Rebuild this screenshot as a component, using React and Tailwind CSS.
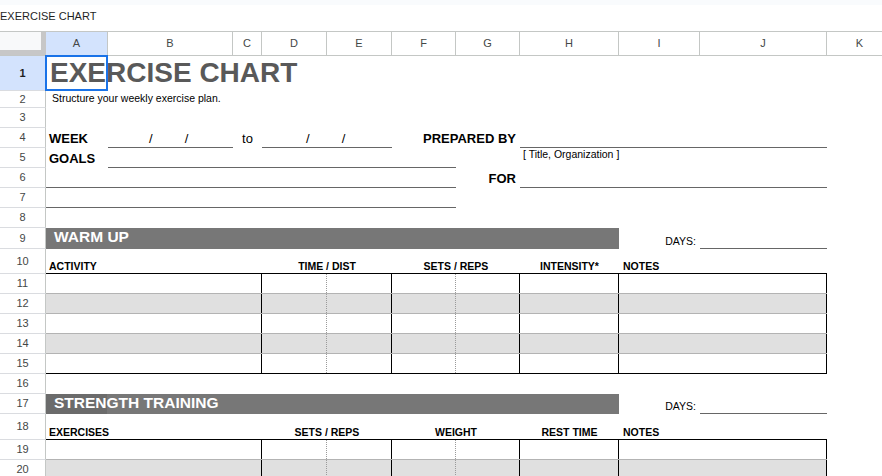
import React from "react";

const LINE = "border-b border-b-[#666666]";
const HEAD = "text-[10.5px] font-bold leading-[12px] text-black";

// Row number gutter + the row's cells
const Row = ({ n, h, active, children }) => (
  <div className={`flex ${h}`}>
    <div
      className={`w-[46px] shrink-0 flex items-center justify-center border-r border-b border-r-[#c4c7c5] border-b-[#dadce0] text-[11px] ${
        active ? "bg-[#d3e3fd] font-bold text-[#1f1f1f]" : "text-[#444746]"
      }`}
    >
      {n}
    </div>
    <div className="flex min-w-0">{children}</div>
  </div>
);

const Label = ({ w, right, children }) => (
  <div
    className={`${w} flex items-end pb-[2px] text-[13px] leading-[15px] font-bold text-black whitespace-nowrap ${
      right ? "justify-end pr-[4px]" : "pl-[3px]"
    }`}
  >
    {children}
  </div>
);

const Band = ({ n, title, dark }) => (
  <Row n={n} h={n === 9 ? "h-[21px]" : "h-[20px]"}>
    <div
      className={`w-[573px] flex items-start pl-[8px] text-[15.5px] leading-[18px] font-bold text-white whitespace-nowrap ${
        dark
          ? "bg-[linear-gradient(to_right,#6b6b6b_61px,#777777_61px)]"
          : "bg-[#777777]"
      }`}
    >
      {title}
    </div>
    <div className="w-[81px] flex items-end justify-end pr-[4px] pb-[2px] text-[10.5px] leading-[12px] text-black">
      DAYS:
    </div>
    <div className={`w-[127px] ${LINE}`} />
  </Row>
);

const ColHeads = ({ n, h, cols }) => (
  <Row n={n} h={h}>
    <div className="w-[781px] flex border-b border-b-black">
      <div className={`w-[216px] flex items-end pb-[1px] pl-[3px] ${HEAD}`}>{cols[0]}</div>
      <div className={`w-[130px] flex items-end justify-center pb-[1px] ${HEAD}`}>{cols[1]}</div>
      <div className={`w-[128px] flex items-end justify-center pb-[1px] ${HEAD}`}>{cols[2]}</div>
      <div className={`w-[99px] flex items-end justify-center pb-[1px] ${HEAD}`}>{cols[3]}</div>
      <div className={`w-[208px] flex items-end pb-[1px] pl-[4px] ${HEAD}`}>{cols[4]}</div>
    </div>
  </Row>
);

const LogRow = ({ n, shade, last }) => (
  <Row n={n} h="h-[20px]">
    <div
      className={`w-[781px] flex border-b ${last ? "border-b-black" : "border-b-[#b3b3b3]"} ${
        shade ? "bg-[#e0e0e0]" : "bg-white"
      }`}
    >
      <div className="w-[216px] border-r border-r-black" />
      <div className="w-[65px] border-r border-dotted border-r-[#9a9a9a]" />
      <div className="w-[65px] border-r border-r-black" />
      <div className="w-[64px] border-r border-dotted border-r-[#9a9a9a]" />
      <div className="w-[64px] border-r border-r-black" />
      <div className="w-[99px] border-r border-r-black" />
      <div className="w-[208px] border-r border-r-black" />
    </div>
  </Row>
);

const columns = [
  ["A", "w-[62px]"],
  ["B", "w-[125px]"],
  ["C", "w-[29px]"],
  ["D", "w-[65px]"],
  ["E", "w-[65px]"],
  ["F", "w-[64px]"],
  ["G", "w-[64px]"],
  ["H", "w-[99px]"],
  ["I", "w-[81px]"],
  ["J", "w-[127px]"],
  ["K", "w-[66px]"],
];

export default function App() {
  return (
    <div className="relative w-[882px] h-[476px] overflow-hidden bg-white font-['Liberation_Sans',Arial,sans-serif]">
      <div className="h-[5px] bg-[#f9fbfd]" />
      <div className="h-[26px] flex items-start pt-[5px] text-[11px] leading-[13px] text-[#1f1f1f]">
        EXERCISE CHART
      </div>

      {/* column letters */}
      <div className="flex h-[25px] border-t border-b border-[#c4c7c5]">
        <div className="w-[46px] shrink-0 bg-[#f8f9fa] border-r-[5px] border-b-[5px] border-[#c7c7c7]" />
        {columns.map(([letter, w], i) => (
          <div
            key={letter}
            className={`${w} shrink-0 flex items-center justify-center border-r border-r-[#c4c7c5] text-[11px] text-[#444746] ${
              i === 0 ? "bg-[#d3e3fd]" : ""
            }`}
          >
            {letter}
          </div>
        ))}
      </div>

      <Row n={1} h="h-[35px]" active>
        <div className="flex items-end pb-[4px] pl-[4px] text-[28px] leading-[28px] font-bold text-[#595959] whitespace-nowrap">
          EXERCISE CHART
        </div>
      </Row>
      <Row n={2} h="h-[17px]">
        <div className="flex items-end pb-[4px] pl-[6px] text-[10.5px] leading-[12px] text-black whitespace-nowrap">
          Structure your weekly exercise plan.
        </div>
      </Row>
      <Row n={3} h="h-[20px]" />
      <Row n={4} h="h-[20px]">
        <Label w="w-[62px]">WEEK</Label>
        <div className={`w-[125px] flex items-end pb-[1px] text-[13px] leading-[15px] ${LINE}`}>
          <span className="ml-[41px]">/</span>
          <span className="ml-[32px]">/</span>
        </div>
        <div className="w-[29px] flex items-end justify-center pb-[2px] text-[13px] leading-[15px]">to</div>
        <div className={`w-[130px] flex items-end pb-[1px] text-[13px] leading-[15px] ${LINE}`}>
          <span className="ml-[44px]">/</span>
          <span className="ml-[32px]">/</span>
        </div>
        <Label w="w-[128px]" right>
          PREPARED BY
        </Label>
        <div className={`w-[307px] ${LINE}`} />
      </Row>
      <Row n={5} h="h-[20px]">
        <Label w="w-[62px]">GOALS</Label>
        <div className={`w-[348px] ${LINE}`} />
        <div className="w-[64px]" />
        <div className="w-[307px] flex items-start pl-[3px] text-[10.5px] leading-[12px] text-black">
          [ Title, Organization ]
        </div>
      </Row>
      <Row n={6} h="h-[20px]">
        <div className={`w-[410px] ${LINE}`} />
        <Label w="w-[64px]" right>
          FOR
        </Label>
        <div className={`w-[307px] ${LINE}`} />
      </Row>
      <Row n={7} h="h-[20px]">
        <div className={`w-[410px] ${LINE}`} />
      </Row>
      <Row n={8} h="h-[20px]" />

      <Band n={9} title="WARM UP" />
      <ColHeads n={10} h="h-[25px]" cols={["ACTIVITY", "TIME / DIST", "SETS / REPS", "INTENSITY*", "NOTES"]} />
      <LogRow n={11} />
      <LogRow n={12} shade />
      <LogRow n={13} />
      <LogRow n={14} shade />
      <LogRow n={15} last />
      <Row n={16} h="h-[20px]" />

      <Band n={17} title="STRENGTH TRAINING" dark />
      <ColHeads n={18} h="h-[26px]" cols={["EXERCISES", "SETS / REPS", "WEIGHT", "REST TIME", "NOTES"]} />
      <LogRow n={19} />
      <LogRow n={20} shade />

      {/* active cell A1 */}
      <div className="absolute left-[45px] top-[55px] w-[63px] h-[36px] border-2 border-[#1a73e8] pointer-events-none" />
    </div>
  );
}
